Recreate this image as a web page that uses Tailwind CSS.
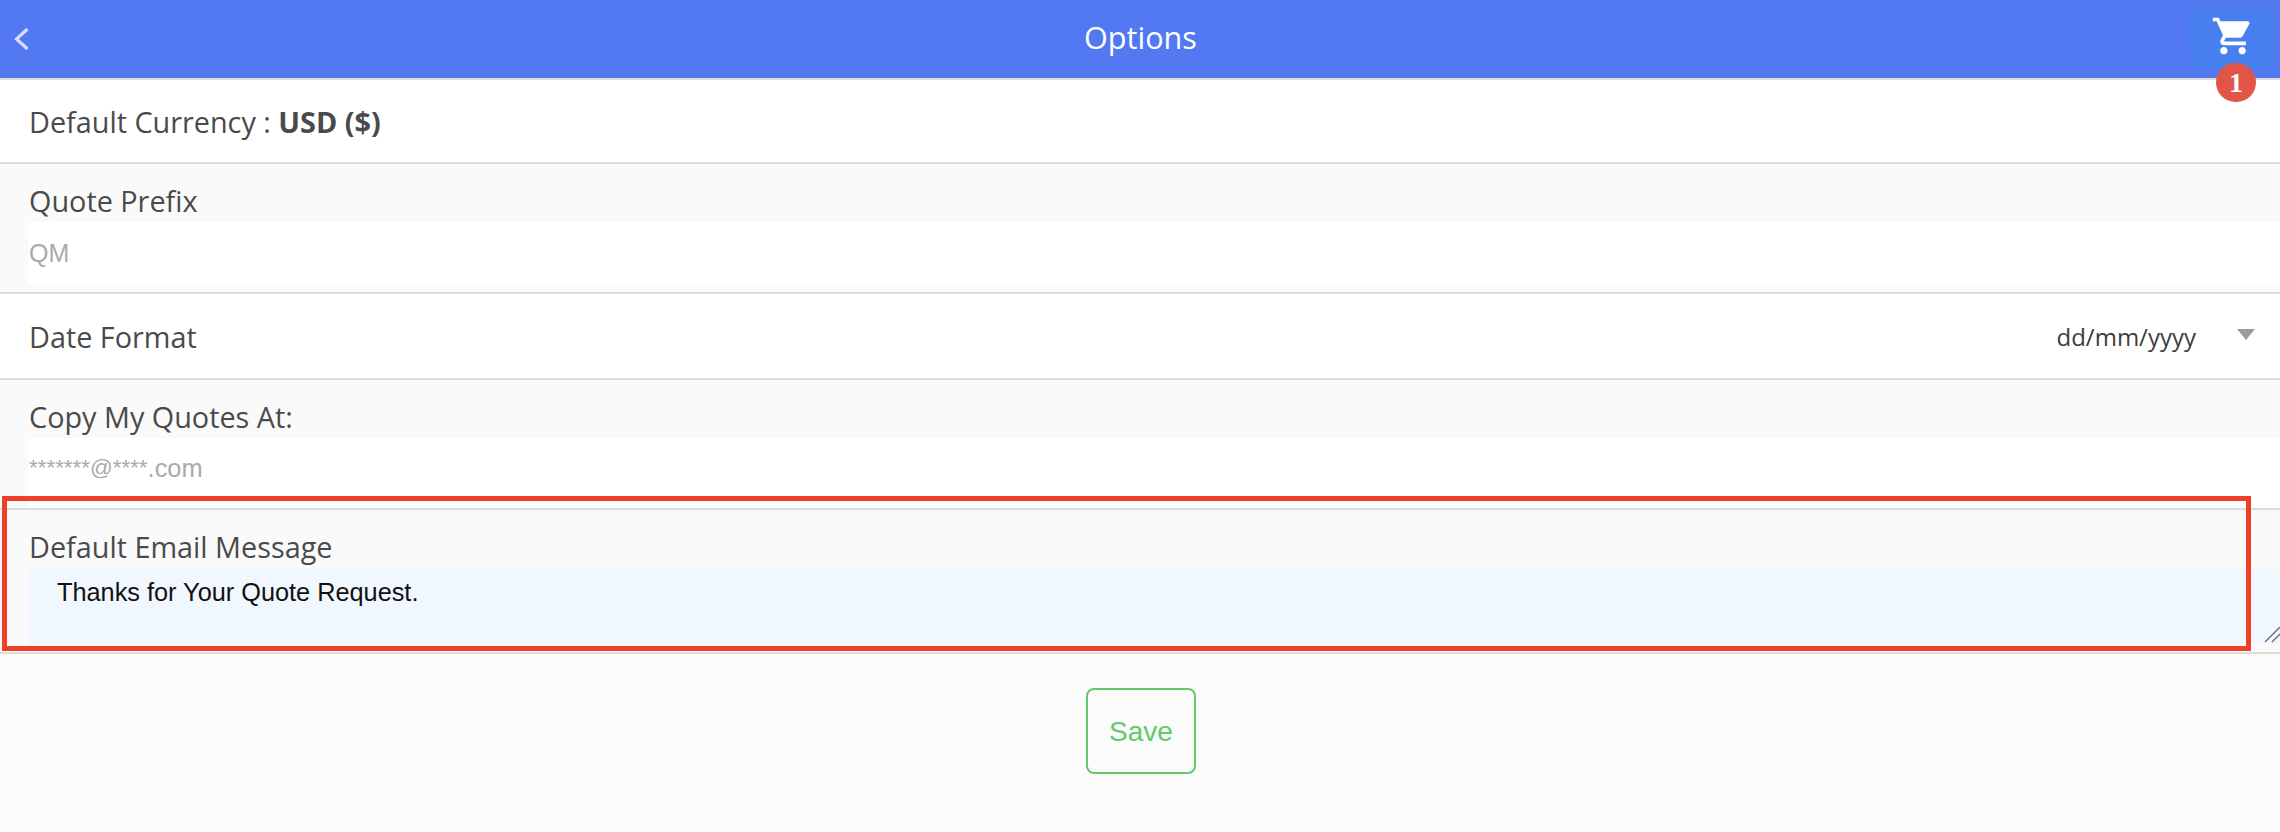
<!doctype html>
<html>
<head>
<meta charset="utf-8">
<script src="https://cdn.jsdelivr.net/npm/@tailwindcss/browser@4"></script>
</head>
<body class="relative h-[832px] w-[2280px] overflow-hidden bg-[#fbfbfb] font-['Open_Sans',sans-serif] text-[#4a4a4a]">
  <header class="relative flex h-[80px] items-center justify-center border-b-2 border-[#dfe0dc] bg-[#5278f2] pb-[4px]">
    <svg class="absolute left-[14px] top-[27px]" width="16" height="24" viewBox="0 0 16 24" fill="none"><path d="M13.5 2 L2.5 12 L13.5 22" stroke="#d5deff" stroke-width="3.2"/></svg>
    <span class="pl-[1px] text-[30.6px] leading-none text-white">Options</span>
    <div class="absolute left-[2190px] top-[8px] flex h-[60px] w-[84px] items-center justify-center rounded-lg bg-[#4780ee] pb-[4px] pl-[2px]">
      <svg width="44" height="44" viewBox="0 0 24 24" fill="#fff"><path d="M7 18c-1.1 0-1.99.9-1.99 2S5.9 22 7 22s2-.9 2-2-.9-2-2-2zM1 2v2h2l3.6 7.59-1.35 2.45c-.16.28-.25.61-.25.96 0 1.1.9 2 2 2h12v-2H7.42c-.14 0-.25-.11-.25-.25l.03-.12.9-1.63h7.45c.75 0 1.41-.41 1.75-1.03l3.58-6.49c.08-.14.12-.31.12-.48 0-.55-.45-1-1-1H5.21l-.94-2H1zm16 16c-1.1 0-1.99.9-1.99 2s.89 2 1.99 2 2-.9 2-2-.9-2-2-2z"/></svg>
    </div>
    <div class="absolute left-[2216px] top-[63px] z-10 flex h-[39px] w-[40px] items-center justify-center rounded-full bg-[#e05546] font-['Liberation_Serif',serif] text-[28px] font-bold leading-none text-white">1</div>
  </header>

  <section class="flex h-[84px] items-center border-b-2 border-[#dcdcdc] bg-white pl-[29px] pt-[2px] text-[28.8px]">
    <span>Default Currency : <b class="font-bold">USD ($)</b></span>
  </section>

  <section class="h-[130px] border-b-2 border-[#dcdcdc] bg-[#fafafa]">
    <div class="h-[58px] pl-[29px] pt-[18px] text-[28.8px] leading-[38px]">Quote Prefix</div>
    <div class="ml-[28px] flex h-[62px] items-center rounded-l bg-white pl-[1px] pt-[2px] font-['Liberation_Sans',sans-serif] text-[25px] text-[#aaa]">QM</div>
  </section>

  <section class="flex h-[86px] items-center justify-between border-b-2 border-[#dcdcdc] bg-white pl-[29px] pt-[2px] text-[28.8px]">
    <span>Date Format</span>
    <span class="flex items-center text-[24px] text-[#3d3d3d]">dd/mm/yyyy
      <svg class="ml-[41px] mr-[25px] -mt-[5px]" width="18" height="11" viewBox="0 0 18 11"><path d="M0 0H18L9 11Z" fill="#9b9b9b"/></svg>
    </span>
  </section>

  <section class="h-[130px] border-b-2 border-[#dcdcdc] bg-[#fafafa]">
    <div class="h-[58px] pl-[29px] pt-[18px] text-[28.8px] leading-[38px]">Copy My Quotes At:</div>
    <div class="ml-[28px] flex h-[70px] items-center rounded-l bg-white pl-[1px] pb-[10px] font-['Liberation_Sans',sans-serif] text-[#aaa]"><span class="text-[22.4px]">*******@****</span><span class="text-[25.4px]">.com</span></div>
  </section>

  <section class="relative h-[144px] border-b-2 border-[#dcdcdc] bg-[#fafafa]">
    <div class="h-[58px] pl-[29px] pt-[18px] text-[28.8px] leading-[38px]">Default Email Message</div>
    <div class="ml-[28px] h-[76px] rounded-l bg-[#f0f7fe] pl-[29px] pt-[8px] font-['Liberation_Sans',sans-serif] text-[25.3px] leading-[32px] text-[#111]">Thanks for Your Quote Request.</div>
    <svg class="absolute right-0 top-[117px]" width="16" height="16" viewBox="0 0 16 16" fill="none" stroke="#666" stroke-width="1.3"><path d="M1 15 L16 0 M8 15 L16 7"/></svg>
  </section>

  <div class="flex justify-center pl-[2px] pt-[34px]">
    <button class="flex h-[86px] w-[110px] items-center justify-center rounded-lg border-2 border-[#62ca6b] pt-[2px] font-['Liberation_Sans',sans-serif] text-[28px] text-[#62ca6b]">Save</button>
  </div>

  <div class="pointer-events-none absolute left-[2px] top-[496px] h-[155px] w-[2249px] border-[5px] border-[#ee4026]"></div>
</body>
</html>
